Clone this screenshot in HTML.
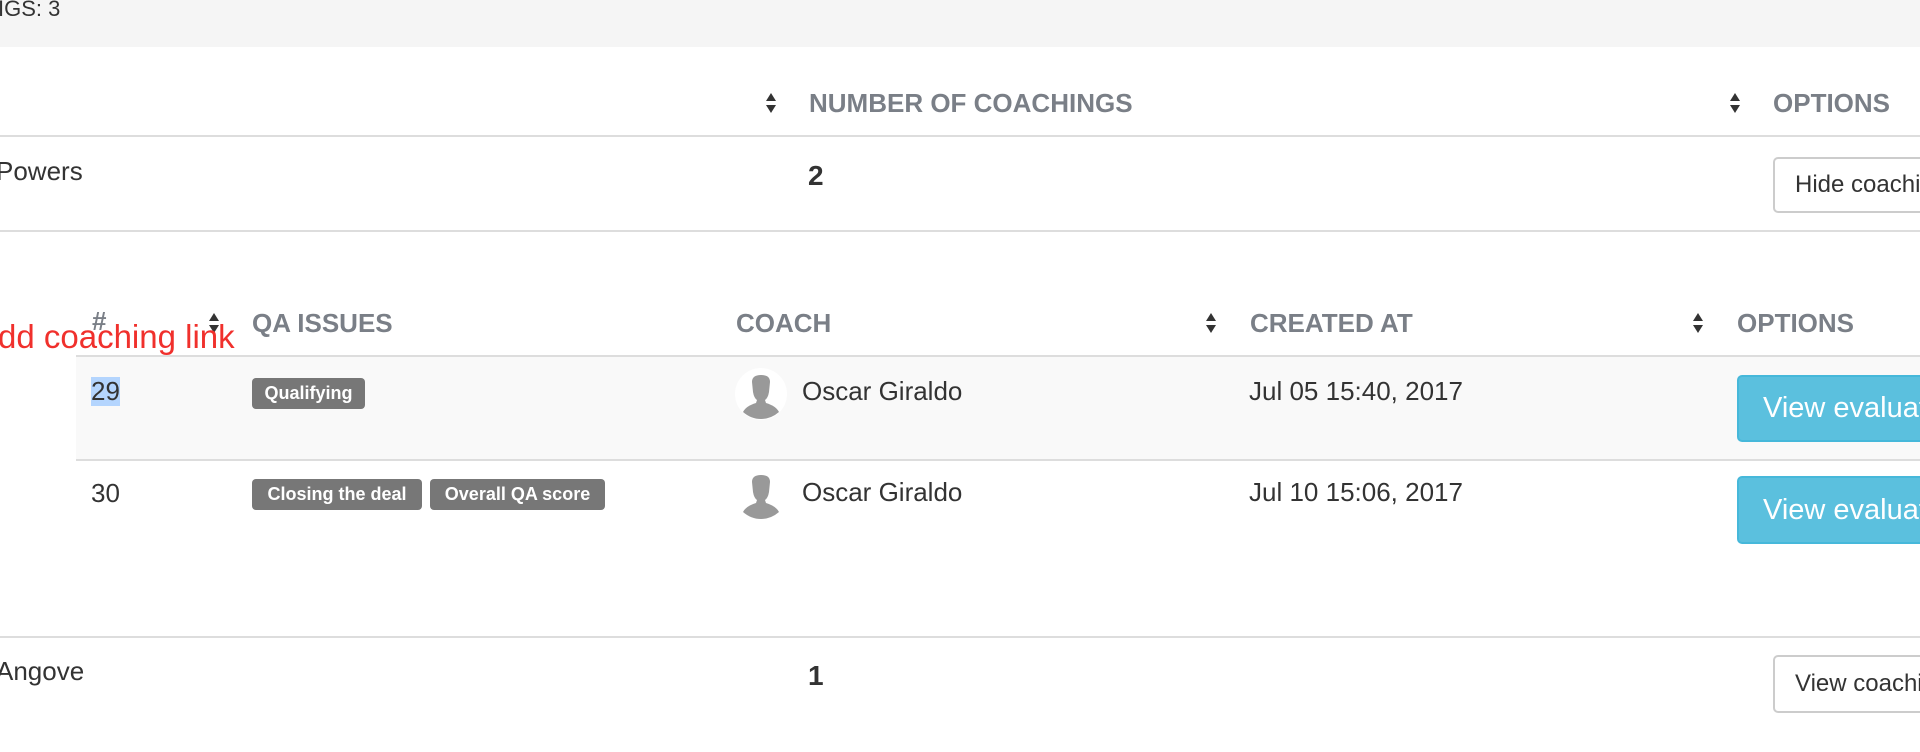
<!DOCTYPE html>
<html><head><style>
body{margin:0;width:1920px;height:752px;background:#fff;position:relative;overflow:hidden;font-family:"Liberation Sans",Arial,sans-serif;color:#333}
.a{position:absolute;white-space:nowrap}
.h{font-weight:bold;color:#7a7f87;font-size:26px}
.t{font-size:26px;color:#333}
.line{position:absolute;left:0;right:0;height:2px;background:#ddd}
.sort{position:absolute;width:12px;height:22px}
.b{position:absolute;background:#777;color:#fff;font-weight:bold;font-size:18px;border-radius:4px;height:31px;line-height:31px;text-align:center}
.btn{position:absolute;border-radius:5px;font-size:29px}
</style></head><body>
<div class="a" style="left:0;top:0;right:0;height:47px;background:#f5f5f5"></div>
<div class="a t" style="left:-2px;top:-4px;font-size:22px">IGS: 3</div>

<svg class="sort" style="left:765px;top:92px" viewBox="0 0 12 22"><path d="M6 1L11 9H1Z M6 21L11 13H1Z" fill="#333"/></svg>
<div class="a h" style="left:809px;top:88px">NUMBER OF COACHINGS</div>
<svg class="sort" style="left:1729px;top:92px" viewBox="0 0 12 22"><path d="M6 1L11 9H1Z M6 21L11 13H1Z" fill="#333"/></svg>
<div class="a h" style="left:1773px;top:88px">OPTIONS</div>
<div class="line" style="top:135px"></div>

<div class="a t" style="left:-4px;top:156px">Powers</div>
<div class="a t" style="left:808px;top:160px;font-weight:bold;font-size:28px">2</div>
<div class="btn" style="left:1773px;top:157px;width:220px;height:56px;border:2px solid #ccc;box-sizing:border-box;background:#fff;color:#333;font-size:24px;line-height:52px;padding-left:20px">Hide coaching</div>
<div class="line" style="top:230px"></div>

<div class="a h" style="left:92px;top:306px">#</div>
<svg class="sort" style="left:208px;top:312px" viewBox="0 0 12 22"><path d="M6 1L11 9H1Z M6 21L11 13H1Z" fill="#333"/></svg>
<div class="a h" style="left:252px;top:308px">QA ISSUES</div>
<div class="a h" style="left:736px;top:308px">COACH</div>
<svg class="sort" style="left:1205px;top:312px" viewBox="0 0 12 22"><path d="M6 1L11 9H1Z M6 21L11 13H1Z" fill="#333"/></svg>
<div class="a h" style="left:1250px;top:308px">CREATED AT</div>
<svg class="sort" style="left:1692px;top:312px" viewBox="0 0 12 22"><path d="M6 1L11 9H1Z M6 21L11 13H1Z" fill="#333"/></svg>
<div class="a h" style="left:1737px;top:308px">OPTIONS</div>
<div class="a" style="left:-2px;top:318px;color:#f0302c;font-size:33px">dd coaching link</div>
<div class="a" style="left:76px;right:0;top:355px;height:2px;background:#ddd"></div>
<div class="a" style="left:76px;right:0;top:357px;height:102px;background:#f9f9f9"></div>
<div class="a" style="left:76px;right:0;top:459px;height:2px;background:#ddd"></div>

<div class="a t" style="left:91px;top:377px;background:#b4d5fe;line-height:29px">29</div>
<div class="b" style="left:252px;top:378px;width:113px">Qualifying</div>
<svg class="a" style="left:735px;top:368px" width="52" height="52" viewBox="0 0 52 52"><circle cx="26" cy="26" r="26" fill="#fff"/><path d="M17 14Q17 7 26 7Q35 7 35 14L34 24Q33 30 30 32L31 35Q41 38 44 44Q36 51 26 51Q16 51 8 44Q11 38 21 35L22 32Q19 30 18 24Z" fill="#999"/></svg>
<div class="a t" style="left:802px;top:376px">Oscar Giraldo</div>
<div class="a t" style="left:1249px;top:376px">Jul 05 15:40, 2017</div>
<div class="btn" style="left:1737px;top:375px;width:300px;height:67px;background:#5bc0de;border:2px solid #46b8da;box-sizing:border-box;color:#fff;line-height:63px;padding-left:24px">View evaluation</div>

<div class="a t" style="left:91px;top:478px">30</div>
<div class="b" style="left:252px;top:479px;width:170px">Closing the deal</div>
<div class="b" style="left:430px;top:479px;width:175px">Overall QA score</div>
<svg class="a" style="left:735px;top:468px" width="52" height="52" viewBox="0 0 52 52"><path d="M17 14Q17 7 26 7Q35 7 35 14L34 24Q33 30 30 32L31 35Q41 38 44 44Q36 51 26 51Q16 51 8 44Q11 38 21 35L22 32Q19 30 18 24Z" fill="#999"/></svg>
<div class="a t" style="left:802px;top:477px">Oscar Giraldo</div>
<div class="a t" style="left:1249px;top:477px">Jul 10 15:06, 2017</div>
<div class="btn" style="left:1737px;top:476px;width:300px;height:68px;background:#5bc0de;border:2px solid #46b8da;box-sizing:border-box;color:#fff;line-height:64px;padding-left:24px">View evaluation</div>

<div class="line" style="top:636px"></div>
<div class="a t" style="left:-4px;top:656px">Angove</div>
<div class="a t" style="left:808px;top:660px;font-weight:bold;font-size:28px">1</div>
<div class="btn" style="left:1773px;top:655px;width:220px;height:58px;border:2px solid #ccc;box-sizing:border-box;background:#fff;color:#333;font-size:24px;line-height:54px;padding-left:20px">View coaching</div>
</body></html>
